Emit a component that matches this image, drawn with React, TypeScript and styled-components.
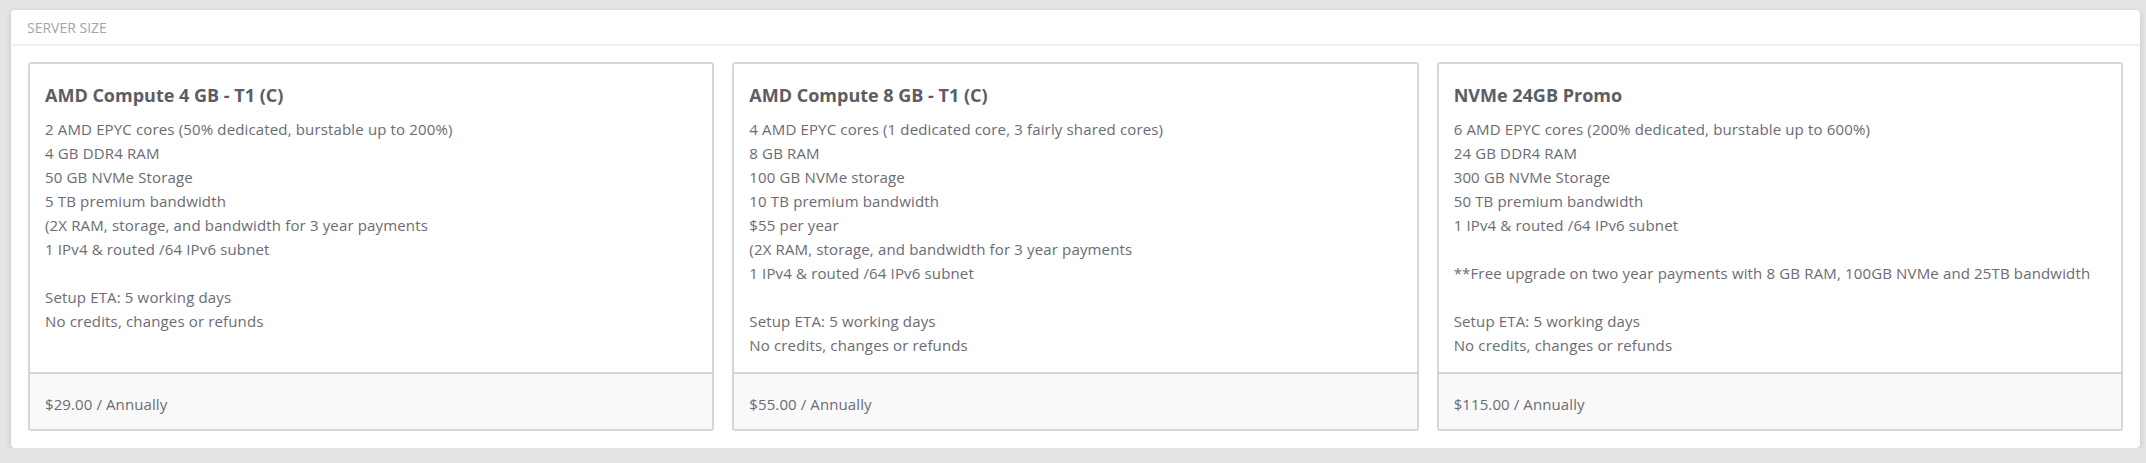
import styled, { createGlobalStyle } from "styled-components";

const GlobalStyle = createGlobalStyle`
  html, body {
    margin: 0;
    background: #e4e4e6;
  }
  body {
    padding: 10px 6px 0 11px;
    font-family: "Open Sans", "Noto Sans", sans-serif;
  }
`;

const Panel = styled.section`
  background: #fff;
  border-radius: 4px;
  box-shadow: 0 2px 6px rgba(0, 0, 0, 0.14);
  padding-bottom: 17px;
`;

const PanelHeader = styled.div`
  padding: 1px 16px 0;
  height: 33px;
  display: flex;
  align-items: center;
  border-bottom: 2px solid #f1f1f3;
  color: #a4a4ae;
  font-size: 14px;
`;

const Cards = styled.div`
  margin-top: 16px;
  padding: 0 17px;
  display: grid;
  grid-template-columns: repeat(3, 1fr);
  gap: 18px;
`;

const Card = styled.div`
  display: flex;
  flex-direction: column;
  border: 2px solid #d6d6da;
  border-radius: 3px;
  overflow: hidden;
`;

const CardBody = styled.div`
  flex: 1;
  padding: 21px 15px 15px;
`;

const Title = styled.h3`
  margin: 0 0 12px;
  font-size: 18px;
  line-height: 20px;
  font-weight: 700;
  color: #5c5c66;
`;

const Line = styled.div`
  min-height: 24px;
  font-size: 15px;
  letter-spacing: 0.15px;
  line-height: 24px;
  color: #6b6b76;
  white-space: nowrap;
`;

const CardFooter = styled.div`
  border-top: 2px solid #d6d6da;
  background: #f9f9f9;
  padding: 18px 15px 13px;
  font-size: 15px;
  letter-spacing: 0.1px;
  line-height: 24px;
  color: #6b6b76;
`;

interface Plan {
  name: string;
  lines: string[];
  price: string;
}

const plans: Plan[] = [
  {
    name: "AMD Compute 4 GB - T1 (C)",
    lines: [
      "2 AMD EPYC cores (50% dedicated, burstable up to 200%)",
      "4 GB DDR4 RAM",
      "50 GB NVMe Storage",
      "5 TB premium bandwidth",
      "(2X RAM, storage, and bandwidth for 3 year payments",
      "1 IPv4 & routed /64 IPv6 subnet",
      "",
      "Setup ETA: 5 working days",
      "No credits, changes or refunds",
    ],
    price: "$29.00 / Annually",
  },
  {
    name: "AMD Compute 8 GB - T1 (C)",
    lines: [
      "4 AMD EPYC cores (1 dedicated core, 3 fairly shared cores)",
      "8 GB RAM",
      "100 GB NVMe storage",
      "10 TB premium bandwidth",
      "$55 per year",
      "(2X RAM, storage, and bandwidth for 3 year payments",
      "1 IPv4 & routed /64 IPv6 subnet",
      "",
      "Setup ETA: 5 working days",
      "No credits, changes or refunds",
    ],
    price: "$55.00 / Annually",
  },
  {
    name: "NVMe 24GB Promo",
    lines: [
      "6 AMD EPYC cores (200% dedicated, burstable up to 600%)",
      "24 GB DDR4 RAM",
      "300 GB NVMe Storage",
      "50 TB premium bandwidth",
      "1 IPv4 & routed /64 IPv6 subnet",
      "",
      "**Free upgrade on two year payments with 8 GB RAM, 100GB NVMe and 25TB bandwidth",
      "",
      "Setup ETA: 5 working days",
      "No credits, changes or refunds",
    ],
    price: "$115.00 / Annually",
  },
];

function App() {
  return (
    <>
      <GlobalStyle />
      <Panel>
        <PanelHeader>SERVER SIZE</PanelHeader>
        <Cards>
          {plans.map((plan) => (
            <Card key={plan.name}>
              <CardBody>
                <Title>{plan.name}</Title>
                {plan.lines.map((line, i) => (
                  <Line key={i}>{line}</Line>
                ))}
              </CardBody>
              <CardFooter>{plan.price}</CardFooter>
            </Card>
          ))}
        </Cards>
      </Panel>
    </>
  );
}

export default App;
